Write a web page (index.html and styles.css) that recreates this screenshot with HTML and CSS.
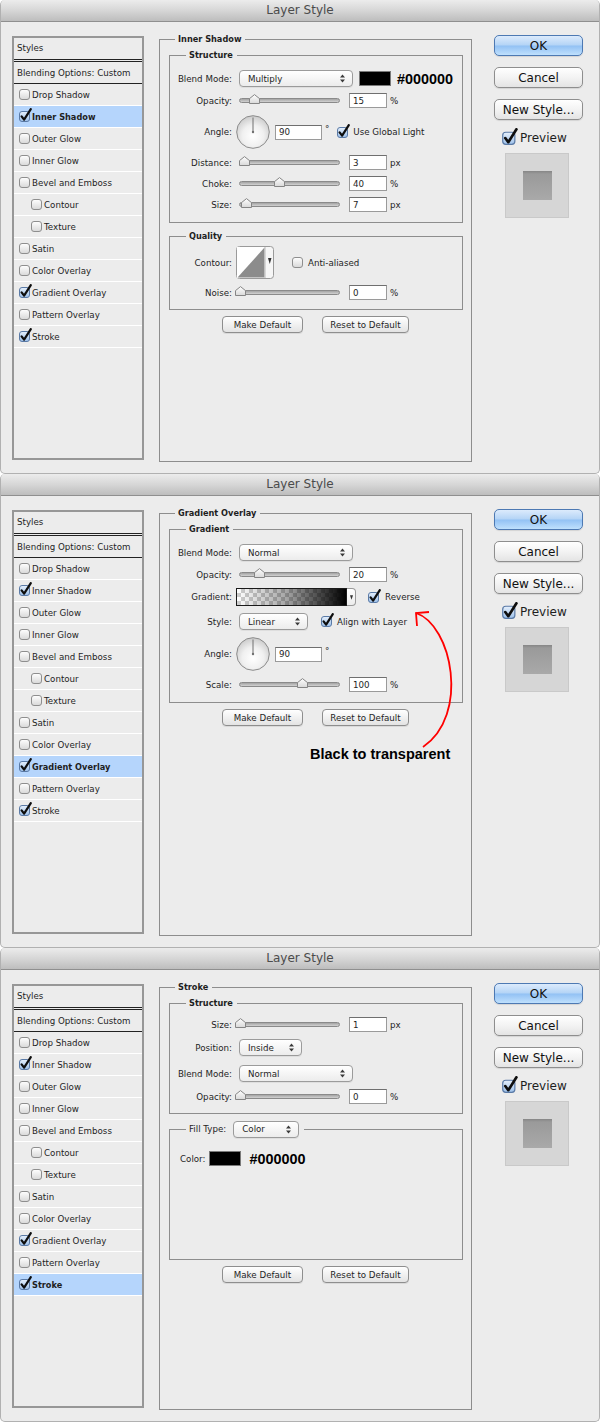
FILE: index.html
```html
<!DOCTYPE html>
<html lang="en">
<head>
    <meta charset="UTF-8">
    <meta name="viewport" content="width=device-width, initial-scale=1.0">
    <title>Layer Style</title>
    <link rel="stylesheet" href="styles.css">
</head>
<body>
    <svg class="defs" aria-hidden="true">
        <defs>
            <linearGradient id="g-box" x1="0" y1="0" x2="0" y2="1"><stop offset="0" stop-color="#ffffff"/><stop offset="1" stop-color="#d8d8d8"/></linearGradient>
            <linearGradient id="g-box-on" x1="0" y1="0" x2="0" y2="1"><stop offset="0" stop-color="#e6f0fc"/><stop offset="1" stop-color="#9cc0ea"/></linearGradient>
            <radialGradient id="g-dial" cx="0.5" cy="0.62" r="0.6"><stop offset="0" stop-color="#ffffff"/><stop offset="0.55" stop-color="#f0f0f0"/><stop offset="1" stop-color="#cdcdcd"/></radialGradient>
            <symbol id="cb-off" viewBox="0 0 13 14"><rect x="0.5" y="3.5" width="10" height="10" rx="2.5" fill="url(#g-box)" stroke="#8e8e8e"/></symbol>
            <symbol id="cb-on" viewBox="0 0 13 14"><rect x="0.5" y="3.5" width="10" height="10" rx="2.5" fill="url(#g-box-on)" stroke="#5a7aa6"/><path d="M2.6 8.3 L5.1 11.7 L11.8 1.1" fill="none" stroke="#0e0e0e" stroke-width="2.2" stroke-linecap="round" stroke-linejoin="round"/></symbol>
            <symbol id="updown" viewBox="0 0 5 9"><path d="M0 3.6 L2.5 0.4 L5 3.6Z M0 5.4 L2.5 8.6 L5 5.4Z" fill="#3a3a3a"/></symbol>
            <symbol id="down" viewBox="0 0 4 6"><path d="M0 0 H4 L2 6Z" fill="#333"/></symbol>
            <symbol id="thumb" viewBox="0 0 11 10"><path d="M0.5 9.5 V4.6 L5.5 0.6 L10.5 4.6 V9.5 Z" fill="url(#g-box)" stroke="#858585"/></symbol>
            <symbol id="dial" viewBox="0 0 34 34"><circle cx="17" cy="17" r="16.3" fill="url(#g-dial)" stroke="#8b8b8b"/><line x1="17" y1="17" x2="17" y2="2.5" stroke="#707070"/><circle cx="17" cy="17" r="1.2" fill="#707070"/></symbol>
        </defs>
    </svg>

    <!-- inner shadow -->
    <div class="window">
        <div class="titlebar">Layer Style</div>
        <div class="wbody">
            <div class="styles">
                <div class="st-head">Styles</div>
                <div class="st-blend">Blending Options: Custom</div>
                <div class="st-item"><svg class="cb"><use href="#cb-off"/></svg>Drop Shadow</div>
                <div class="st-item current"><svg class="cb"><use href="#cb-on"/></svg>Inner Shadow</div>
                <div class="st-item"><svg class="cb"><use href="#cb-off"/></svg>Outer Glow</div>
                <div class="st-item"><svg class="cb"><use href="#cb-off"/></svg>Inner Glow</div>
                <div class="st-item"><svg class="cb"><use href="#cb-off"/></svg>Bevel and Emboss</div>
                <div class="st-item indent"><svg class="cb"><use href="#cb-off"/></svg>Contour</div>
                <div class="st-item indent"><svg class="cb"><use href="#cb-off"/></svg>Texture</div>
                <div class="st-item"><svg class="cb"><use href="#cb-off"/></svg>Satin</div>
                <div class="st-item"><svg class="cb"><use href="#cb-off"/></svg>Color Overlay</div>
                <div class="st-item"><svg class="cb"><use href="#cb-on"/></svg>Gradient Overlay</div>
                <div class="st-item"><svg class="cb"><use href="#cb-off"/></svg>Pattern Overlay</div>
                <div class="st-item"><svg class="cb"><use href="#cb-on"/></svg>Stroke</div>
            </div>

            <fieldset class="group">
                <legend>Inner Shadow</legend>
                <fieldset class="sub">
                    <legend>Structure</legend>
                    <div class="row s">
                        <span class="lbl">Blend Mode:</span>
                        <span class="sel w114">Multiply<svg class="ud"><use href="#updown"/></svg></span>
                        <span class="swatch"></span>
                        <span class="hex">#000000</span>
                    </div>
                    <div class="row">
                        <span class="lbl">Opacity:</span>
                        <span class="track"><svg class="thumb" style="left:9px"><use href="#thumb"/></svg></span>
                        <span class="num">15</span><span class="unit">%</span>
                    </div>
                    <div class="row a">
                        <span class="lbl">Angle:</span>
                        <svg class="dial"><use href="#dial"/></svg>
                        <span class="num wide">90</span><span class="deg">°</span>
                        <svg class="cb after-deg"><use href="#cb-on"/></svg><span class="cb-text">Use Global Light</span>
                    </div>
                    <div class="row">
                        <span class="lbl">Distance:</span>
                        <span class="track"><svg class="thumb" style="left:-1px"><use href="#thumb"/></svg></span>
                        <span class="num">3</span><span class="unit">px</span>
                    </div>
                    <div class="row">
                        <span class="lbl">Choke:</span>
                        <span class="track"><svg class="thumb" style="left:34px"><use href="#thumb"/></svg></span>
                        <span class="num">40</span><span class="unit">%</span>
                    </div>
                    <div class="row">
                        <span class="lbl">Size:</span>
                        <span class="track"><svg class="thumb" style="left:1px"><use href="#thumb"/></svg></span>
                        <span class="num">7</span><span class="unit">px</span>
                    </div>
                </fieldset>
                <fieldset class="sub quality">
                    <legend>Quality</legend>
                    <div class="row c">
                        <span class="lbl">Contour:</span>
                        <svg class="contour" viewBox="0 0 38 33">
                            <rect x="0.5" y="0.5" width="37" height="32" rx="3" fill="#f6f6f6" stroke="#9a9a9a"/>
                            <rect x="1" y="1" width="28" height="31" fill="#ffffff"/>
                            <polygon points="1.5,31.5 28.5,1.5 28.5,31.5" fill="#8c8c8c"/>
                            <line x1="29" y1="1" x2="29" y2="32" stroke="#b8b8b8"/>
                            <path d="M32 12 H35.5 L33.75 18Z" fill="#333"/>
                        </svg>
                        <svg class="cb after-contour"><use href="#cb-off"/></svg><span class="cb-text">Anti-aliased</span>
                    </div>
                    <div class="row">
                        <span class="lbl">Noise:</span>
                        <span class="track"><svg class="thumb" style="left:-5px"><use href="#thumb"/></svg></span>
                        <span class="num">0</span><span class="unit">%</span>
                    </div>
                </fieldset>
                <div class="btnrow"><span class="btn make">Make Default</span><span class="btn reset">Reset to Default</span></div>
            </fieldset>

            <div class="side">
                <span class="sbtn ok">OK</span>
                <span class="sbtn">Cancel</span>
                <span class="sbtn">New Style...</span>
                <div class="preview-row"><svg class="cb big"><use href="#cb-on"/></svg><span>Preview</span></div>
                <div class="preview"><div class="preview-sq"></div></div>
            </div>
        </div>
    </div>

    <!-- gradient overlay -->
    <div class="window">
        <div class="titlebar">Layer Style</div>
        <div class="wbody">
            <div class="styles">
                <div class="st-head">Styles</div>
                <div class="st-blend">Blending Options: Custom</div>
                <div class="st-item"><svg class="cb"><use href="#cb-off"/></svg>Drop Shadow</div>
                <div class="st-item"><svg class="cb"><use href="#cb-on"/></svg>Inner Shadow</div>
                <div class="st-item"><svg class="cb"><use href="#cb-off"/></svg>Outer Glow</div>
                <div class="st-item"><svg class="cb"><use href="#cb-off"/></svg>Inner Glow</div>
                <div class="st-item"><svg class="cb"><use href="#cb-off"/></svg>Bevel and Emboss</div>
                <div class="st-item indent"><svg class="cb"><use href="#cb-off"/></svg>Contour</div>
                <div class="st-item indent"><svg class="cb"><use href="#cb-off"/></svg>Texture</div>
                <div class="st-item"><svg class="cb"><use href="#cb-off"/></svg>Satin</div>
                <div class="st-item"><svg class="cb"><use href="#cb-off"/></svg>Color Overlay</div>
                <div class="st-item current"><svg class="cb"><use href="#cb-on"/></svg>Gradient Overlay</div>
                <div class="st-item"><svg class="cb"><use href="#cb-off"/></svg>Pattern Overlay</div>
                <div class="st-item"><svg class="cb"><use href="#cb-on"/></svg>Stroke</div>
            </div>

            <fieldset class="group">
                <legend>Gradient Overlay</legend>
                <fieldset class="sub">
                    <legend>Gradient</legend>
                    <div class="row s">
                        <span class="lbl">Blend Mode:</span>
                        <span class="sel w114">Normal<svg class="ud"><use href="#updown"/></svg></span>
                    </div>
                    <div class="row">
                        <span class="lbl">Opacity:</span>
                        <span class="track"><svg class="thumb" style="left:14px"><use href="#thumb"/></svg></span>
                        <span class="num">20</span><span class="unit">%</span>
                    </div>
                    <div class="row g">
                        <span class="lbl">Gradient:</span>
                        <span class="grad"><span class="grad-bar"></span><span class="grad-drop"><svg class="dn"><use href="#down"/></svg></span></span>
                        <svg class="cb after-grad"><use href="#cb-on"/></svg><span class="cb-text">Reverse</span>
                    </div>
                    <div class="row s">
                        <span class="lbl">Style:</span>
                        <span class="sel w69">Linear<svg class="ud"><use href="#updown"/></svg></span>
                        <svg class="cb after-style"><use href="#cb-on"/></svg><span class="cb-text">Align with Layer</span>
                    </div>
                    <div class="row a">
                        <span class="lbl">Angle:</span>
                        <svg class="dial"><use href="#dial"/></svg>
                        <span class="num wide">90</span><span class="deg">°</span>
                    </div>
                    <div class="row">
                        <span class="lbl">Scale:</span>
                        <span class="track"><svg class="thumb" style="left:57px"><use href="#thumb"/></svg></span>
                        <span class="num">100</span><span class="unit">%</span>
                    </div>
                </fieldset>
                <div class="btnrow"><span class="btn make">Make Default</span><span class="btn reset">Reset to Default</span></div>
                <div class="note">Black to transparent</div>
            </fieldset>

            <div class="side">
                <span class="sbtn ok">OK</span>
                <span class="sbtn">Cancel</span>
                <span class="sbtn">New Style...</span>
                <div class="preview-row"><svg class="cb big"><use href="#cb-on"/></svg><span>Preview</span></div>
                <div class="preview"><div class="preview-sq"></div></div>
            </div>
        </div>
        <svg class="arrow" viewBox="0 0 70 150">
            <path d="M16 9 C52 21 70 111 23 143" fill="none" stroke="#ff0000" stroke-width="1.8"/>
            <path d="M29 8 L16 9 L17 22" fill="none" stroke="#ff0000" stroke-width="1.8" stroke-linejoin="miter"/>
        </svg>
    </div>

    <!-- stroke -->
    <div class="window">
        <div class="titlebar">Layer Style</div>
        <div class="wbody">
            <div class="styles">
                <div class="st-head">Styles</div>
                <div class="st-blend">Blending Options: Custom</div>
                <div class="st-item"><svg class="cb"><use href="#cb-off"/></svg>Drop Shadow</div>
                <div class="st-item"><svg class="cb"><use href="#cb-on"/></svg>Inner Shadow</div>
                <div class="st-item"><svg class="cb"><use href="#cb-off"/></svg>Outer Glow</div>
                <div class="st-item"><svg class="cb"><use href="#cb-off"/></svg>Inner Glow</div>
                <div class="st-item"><svg class="cb"><use href="#cb-off"/></svg>Bevel and Emboss</div>
                <div class="st-item indent"><svg class="cb"><use href="#cb-off"/></svg>Contour</div>
                <div class="st-item indent"><svg class="cb"><use href="#cb-off"/></svg>Texture</div>
                <div class="st-item"><svg class="cb"><use href="#cb-off"/></svg>Satin</div>
                <div class="st-item"><svg class="cb"><use href="#cb-off"/></svg>Color Overlay</div>
                <div class="st-item"><svg class="cb"><use href="#cb-on"/></svg>Gradient Overlay</div>
                <div class="st-item"><svg class="cb"><use href="#cb-off"/></svg>Pattern Overlay</div>
                <div class="st-item current"><svg class="cb"><use href="#cb-on"/></svg>Stroke</div>
            </div>

            <fieldset class="group">
                <legend>Stroke</legend>
                <fieldset class="sub stroke-struct">
                    <legend>Structure</legend>
                    <div class="row">
                        <span class="lbl">Size:</span>
                        <span class="track"><svg class="thumb" style="left:-5px"><use href="#thumb"/></svg></span>
                        <span class="num">1</span><span class="unit">px</span>
                    </div>
                    <div class="row s">
                        <span class="lbl">Position:</span>
                        <span class="sel w63">Inside<svg class="ud"><use href="#updown"/></svg></span>
                    </div>
                    <div class="row s spaced">
                        <span class="lbl">Blend Mode:</span>
                        <span class="sel w114">Normal<svg class="ud"><use href="#updown"/></svg></span>
                    </div>
                    <div class="row after-blend">
                        <span class="lbl">Opacity:</span>
                        <span class="track"><svg class="thumb" style="left:-5px"><use href="#thumb"/></svg></span>
                        <span class="num">0</span><span class="unit">%</span>
                    </div>
                </fieldset>
                <fieldset class="sub fill">
                    <legend class="fill-legend">Fill Type:<span class="sel w66">Color<svg class="ud"><use href="#updown"/></svg></span></legend>
                    <div class="color-row">
                        <span>Color:</span>
                        <span class="swatch small"></span>
                        <span class="hex">#000000</span>
                    </div>
                </fieldset>
                <div class="btnrow"><span class="btn make">Make Default</span><span class="btn reset">Reset to Default</span></div>
            </fieldset>

            <div class="side">
                <span class="sbtn ok">OK</span>
                <span class="sbtn">Cancel</span>
                <span class="sbtn">New Style...</span>
                <div class="preview-row"><svg class="cb big"><use href="#cb-on"/></svg><span>Preview</span></div>
                <div class="preview"><div class="preview-sq"></div></div>
            </div>
        </div>
    </div>
</body>
</html>
```

FILE: styles.css
```css
*{
    box-sizing: border-box;
}
body{
    margin: 0;
    background: #fff;
    font-family: "DejaVu Sans", "Lucida Grande", Verdana, sans-serif;
    font-size: 8.7px;
    color: #1e1e1e;
}
.defs{
    position: absolute;
    width: 0;
    height: 0;
    overflow: hidden;
}

/* window */
.window{
    position: relative;
    height: 474px;
    background: #ececec;
    border: 1px solid #b1b1b1;
    border-top: 0;
    border-radius: 5px;
    overflow: hidden;
}
.titlebar{
    height: 22px;
    line-height: 21px;
    border-bottom: 1px solid #8f8f8f;
    background: linear-gradient(#ececec, #d4d4d4 55%, #bdbdbd);
    text-align: center;
    font-size: 12px;
    color: #4b4b4b;
}
.wbody{
    display: flex;
    align-items: flex-start;
    padding-left: 11px;
}

/* styles list */
.styles{
    flex: none;
    width: 132px;
    height: 424px;
    margin-top: 14px;
    border: 2px solid #979797;
}
.st-head{
    display: flex;
    align-items: center;
    height: 24px;
    padding: 0 0 2px 3px;
    border-bottom: 3px double #222;
}
.st-blend{
    display: flex;
    align-items: center;
    height: 22px;
    padding-left: 3px;
    border-bottom: 1px solid #222;
}
.st-item{
    display: flex;
    align-items: center;
    height: 22px;
    padding-left: 5px;
    border-bottom: 1px solid #fff;
}
.st-item.indent{
    padding-left: 17px;
}
.st-item.current{
    background: #b5d5fc;
    font-weight: bold;
    font-size: 8.2px;
}
.cb{
    flex: none;
    width: 13px;
    height: 14px;
    margin-top: -3px;
}
.cb.big{
    width: 16px;
    height: 17px;
}

/* groups */
fieldset{
    margin: 0;
    padding: 0;
    min-width: 0;
    border: 1px solid #8d8d8d;
}
legend{
    padding: 0 4px 0 3px;
    font-weight: bold;
    font-size: 8.2px;
    line-height: 13px;
}
.group{
    flex: none;
    width: 313px;
    height: 429px;
    margin: 11px 0 0 15px;
    padding-top: 3px;
}
.group > legend{
    margin-left: 15px;
}
.sub{
    margin: 0 8px 0 9px;
    padding: 8px 0 10px 0;
}
.sub > legend{
    margin-left: 16px;
}
.sub + .sub{
    margin-top: 7px;
}
.sub.quality{
    padding: 3px 0 9px 0;
}
.sub.stroke-struct{
    padding-top: 7px;
    padding-bottom: 9px;
}
.sub.fill{
    height: 139px;
    padding-top: 13px;
}
.fill-legend{
    display: flex;
    align-items: center;
    margin-left: 8px;
    padding: 0 5px 0 3px;
    font-weight: normal;
    font-size: 8.7px;
    line-height: 17px;
}
.fill-legend .sel{
    margin-left: 7px;
}

.row{
    display: flex;
    align-items: center;
    height: 15px;
    margin-top: 6px;
}
.sub > legend + .row{
    margin-top: 0;
}
.row.s{
    height: 17px;
    margin-top: 7px;
}
.row.s.spaced{
    margin-top: 9px;
}
.row.after-blend{
    margin-top: 7px;
}
.row.a{
    height: 34px;
    margin-top: 7px;
}
.row.g{
    height: 18px;
}
.row.c{
    height: 33px;
}
.lbl{
    flex: none;
    width: 62px;
    margin-right: 7px;
    text-align: right;
}

/* controls */
.sel{
    flex: none;
    display: flex;
    align-items: center;
    justify-content: space-between;
    height: 17px;
    padding: 0 7px 0 8px;
    border: 1px solid #9b9b9b;
    border-radius: 4px;
    background: linear-gradient(#ffffff, #ececec);
    box-shadow: 0 1px 0 rgba(0,0,0,0.06);
}
.w114{ width: 114px; }
.w69{ width: 69px; }
.w66{ width: 66px; }
.w63{ width: 63px; }
.ud{
    width: 5px;
    height: 9px;
}
.swatch{
    flex: none;
    width: 32px;
    height: 15px;
    margin-left: 6px;
    background: #000;
    border: 1px solid #7a7a7a;
}
.hex{
    margin-left: 6px;
    font-family: "Liberation Sans", Arial, sans-serif;
    font-weight: bold;
    font-size: 14.4px;
    color: #000;
}
.track{
    position: relative;
    flex: none;
    width: 101px;
    height: 5px;
    margin-right: 9px;
    border: 1px solid #8a8a8a;
    border-radius: 3px;
    background: linear-gradient(#a3a3a3, #d2d2d2);
}
.thumb{
    position: absolute;
    bottom: -2px;
    width: 11px;
    height: 10px;
}
.num{
    flex: none;
    display: flex;
    align-items: center;
    width: 38px;
    height: 15px;
    padding-left: 3px;
    background: #fff;
    border: 1px solid #9a9a9a;
    border-top-color: #6f6f6f;
}
.num.wide{
    width: 47px;
    margin-left: 5px;
}
.unit{
    margin-left: 3px;
}
.deg{
    align-self: flex-start;
    margin: 9px 0 0 3px;
    line-height: 10px;
}
.dial{
    flex: none;
    width: 34px;
    height: 34px;
    margin-left: -3px;
}
.cb-text{
    margin-left: 3px;
}
.after-deg{
    margin-left: 8px;
}
.after-contour{
    margin-left: 18px;
}
.after-grad{
    margin-left: 12px;
}
.after-grad + .cb-text{
    margin-left: 4px;
}
.after-style{
    margin-left: 13px;
}
.contour{
    flex: none;
    width: 38px;
    height: 33px;
    margin-left: -3px;
}
.grad{
    flex: none;
    display: flex;
    height: 18px;
    margin-left: -3px;
}
.grad-bar{
    width: 111px;
    border: 1px solid #1a1a1a;
    background:
        linear-gradient(90deg, rgba(0,0,0,0) 0%, rgba(0,0,0,0.35) 45%, #000 100%),
        repeating-conic-gradient(#cfcfcf 0 25%, #fff 0 50%) 0 0 / 8px 8px;
}
.grad-drop{
    display: flex;
    justify-content: center;
    width: 9px;
    padding-top: 6px;
    border: 1px solid #9a9a9a;
    border-left: 0;
    border-radius: 0 4px 4px 0;
    background: linear-gradient(#fff, #ececec);
}
.dn{
    width: 3px;
    height: 5px;
}
.color-row{
    display: flex;
    align-items: center;
    height: 15px;
    padding-left: 10px;
}
.swatch.small{
    margin-left: 4px;
}
.color-row .hex{
    margin-left: 8px;
}

/* buttons */
.btnrow{
    display: flex;
    justify-content: center;
    gap: 19px;
    margin-top: 6px;
}
.btn{
    display: flex;
    align-items: center;
    justify-content: center;
    height: 17px;
    border: 1px solid #8e8e8e;
    border-radius: 4px;
    background: linear-gradient(#ffffff, #f1f1f1 50%, #e3e3e3);
    box-shadow: 0 1px 0 rgba(0,0,0,0.08);
}
.btn.make{ width: 81px; }
.btn.reset{ width: 87px; }
.note{
    margin: 20px 0 0 150px;
    font-family: "Liberation Sans", Arial, sans-serif;
    font-weight: bold;
    font-size: 14.5px;
    line-height: 17px;
    color: #000;
}
.arrow{
    position: absolute;
    left: 399px;
    top: 130px;
    width: 70px;
    height: 150px;
}

/* side column */
.side{
    flex: none;
    display: flex;
    flex-direction: column;
    width: 89px;
    margin: 13px 0 0 22px;
    font-size: 12px;
}
.sbtn{
    display: flex;
    align-items: center;
    justify-content: center;
    height: 21px;
    margin-top: 11px;
    border: 1px solid #8e8e8e;
    border-radius: 5px;
    background: linear-gradient(#ffffff, #f3f3f3 50%, #e4e4e4);
    box-shadow: 0 1px 1px rgba(0,0,0,0.1);
    color: #111;
}
.sbtn.ok{
    margin-top: 0;
    border-color: #4d79b3;
    background: linear-gradient(#dcebfc 0%, #b4d4f6 48%, #92c1f4 52%, #bfe0fd 100%);
}
.preview-row{
    display: flex;
    align-items: center;
    height: 16px;
    margin: 10px 0 0 8px;
}
.preview-row span{
    margin-left: 2px;
}
.preview{
    display: flex;
    align-items: center;
    justify-content: center;
    width: 64px;
    height: 65px;
    margin: 7px 0 0 11px;
    background: #d6d6d6;
    border: 1px solid #c9c9c9;
}
.preview-sq{
    width: 29px;
    height: 29px;
    background: linear-gradient(#868686 0, #9a9a9a 3px, #a9a9a9 100%);
}
```
